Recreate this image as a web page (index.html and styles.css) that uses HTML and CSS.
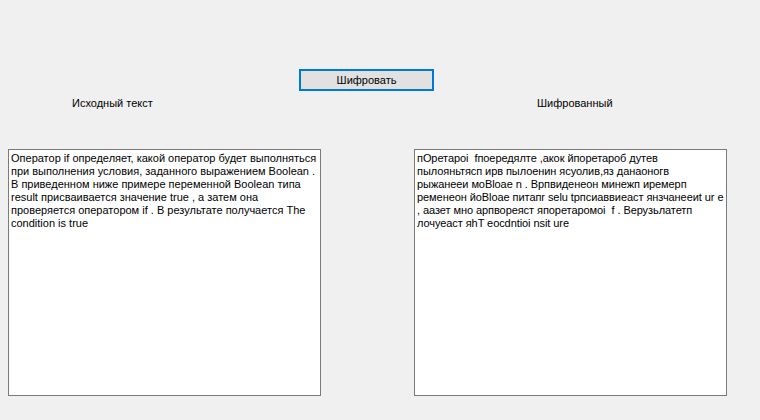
FILE: index.html
```html
<!DOCTYPE html>
<html lang="ru">
<head>
<meta charset="utf-8">
<link rel="stylesheet" href="styles.css">
</head>
<body>
<div class="form">
  <div class="toolbar">
    <button class="btn">Шифровать</button>
  </div>
  <div class="columns">
    <div class="col">
      <div class="label label-left">Исходный текст</div>
      <div class="box">Оператор if определяет, какой оператор будет выполняться при выполнения условия, заданного выражением Boolean . В приведенном ниже примере переменной Boolean типа result присваивается значение true , а затем она проверяется оператором if . В результате получается The condition is true</div>
    </div>
    <div class="col">
      <div class="label label-right">Шифрованный</div>
      <div class="box box-lines">пОретарoi&nbsp; fпоередялте ,акок йпоретароб дутев<br>пылояньтясп ирв пылоенин ясуолив,яз данаоногв<br>рыжанееи моBloae n . Врпвиденеон минежп иремерп<br>ременеон йоBloae питапr selu tрпсиаввиеаст янзчанееиt ur e<br>, аазет мно арпвореяст япоретаромоi&nbsp; f . Верузьлатетп<br>лочуеаст яhT eocdntioi nsit ure</div>
    </div>
  </div>
</div>
</body>
</html>
```
FILE: styles.css
```css
html, body {
  margin: 0;
  padding: 0;
  background: #f0f0f0;
  width: 760px;
  height: 420px;
  overflow: hidden;
  font-family: "Liberation Sans", Arial, sans-serif;
  font-size: 11px;
  color: #000;
}
.form {
  padding-top: 69px;
}
.toolbar {
  padding-left: 299px;
  height: 22px;
}
.btn {
  box-sizing: border-box;
  width: 135px;
  height: 22px;
  margin: 0;
  padding: 0;
  border: 2px solid #0078d7;
  background: #e1e1e1;
  font-family: "Liberation Sans", Arial, sans-serif;
  font-size: 11px;
  color: #000;
  display: block;
}
.columns {
  display: flex;
  padding-left: 8px;
  gap: 93px;
}
.col {
  width: 313px;
}
.label {
  height: 13px;
  line-height: 13px;
  margin-top: 6px;
  margin-bottom: 39px;
}
.label-left { padding-left: 64px; }
.label-right { padding-left: 123px; }
.box {
  box-sizing: border-box;
  width: 313px;
  height: 247px;
  background: #fff;
  border: 1px solid #7a7a7a;
  padding: 2px 3px 0 2px;
  line-height: 13px;
  overflow: hidden;
}
.box-lines {
  white-space: nowrap;
  padding-right: 0;
  letter-spacing: -0.07px;
}
```
